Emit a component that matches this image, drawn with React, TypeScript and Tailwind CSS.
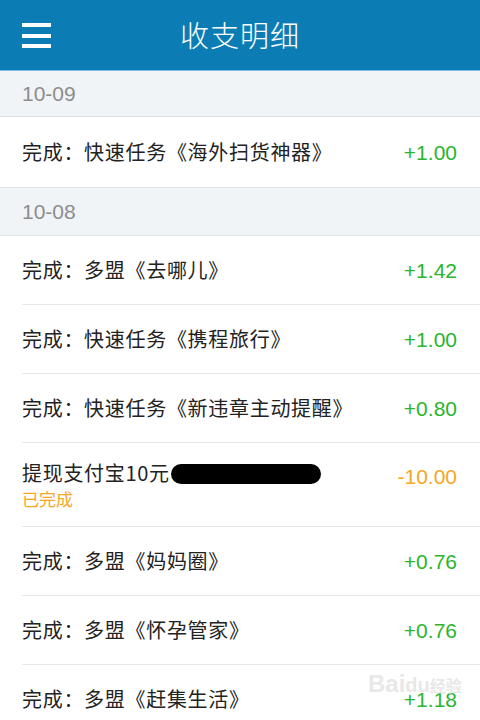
import React from "react";

const cjk = { fontFamily: '"Noto Sans CJK SC", "Noto Sans", sans-serif' };
const num = { fontFamily: '"Liberation Sans", Arial, sans-serif' };

type Row = { text: string; amount: string; kind: "plus" | "minus"; sub?: string; redact?: boolean };

const groups: { date: string; rows: Row[] }[] = [
  { date: "10-09", rows: [{ text: "完成：快速任务《海外扫货神器》", amount: "+1.00", kind: "plus" }] },
  {
    date: "10-08",
    rows: [
      { text: "完成：多盟《去哪儿》", amount: "+1.42", kind: "plus" },
      { text: "完成：快速任务《携程旅行》", amount: "+1.00", kind: "plus" },
      { text: "完成：快速任务《新违章主动提醒》", amount: "+0.80", kind: "plus" },
      { text: "提现支付宝10元", amount: "-10.00", kind: "minus", sub: "已完成", redact: true },
      { text: "完成：多盟《妈妈圈》", amount: "+0.76", kind: "plus" },
      { text: "完成：多盟《怀孕管家》", amount: "+0.76", kind: "plus" },
      { text: "完成：多盟《赶集生活》", amount: "+1.18", kind: "plus" },
    ],
  },
];

function RowItem({ r, last }: { r: Row; last: boolean }) {
  return (
    <div className="pl-[22px] bg-white">
      <div
        className={`flex items-center justify-between pr-[23px] ${r.sub ? "h-[84px]" : last ? "h-[70px]" : "h-[69px]"} ${
          last ? "" : "border-b border-[#e8e8e8]"
        }`}
      >
        <div className="flex flex-col">
          <div className="flex items-center text-[20px] text-[#222] leading-none tracking-[0.7px]" style={cjk}>
            <span>{r.text}</span>
            {r.redact && <span className="inline-block w-[150px] h-[20px] bg-black rounded-full ml-[1px] mt-[2px]" />}
          </div>
          {r.sub && (
            <div className="text-[17px] text-[#f5a623] leading-none mt-[6px]" style={cjk}>
              {r.sub}
            </div>
          )}
        </div>
        <div
          className={`text-[21px] leading-none ${r.kind === "plus" ? "text-[#2ab52a]" : "text-[#f5a623]"} ${
            r.sub ? "-mt-[16px]" : ""
          }`}
          style={num}
        >
          {r.amount}
        </div>
      </div>
    </div>
  );
}

export default function App() {
  return (
    <div className="w-[480px] h-[720px] overflow-hidden bg-white relative">
      <div className="h-[71px] bg-[#0c7db4] flex items-center relative border-b border-[#7cbde0]">
        <div className="absolute left-[22px] top-[23px] flex flex-col gap-[6.5px]">
          <div className="w-[29px] h-[4px] bg-white" />
          <div className="w-[29px] h-[4px] bg-white" />
          <div className="w-[29px] h-[4px] bg-white" />
        </div>
        <div className="flex-1 text-center text-white text-[29px] font-light tracking-[1px]" style={cjk}>
          收支明细
        </div>
      </div>
      {groups.map((g, gi) => (
        <div key={g.date}>
          <div
            className={`${gi === 0 ? "h-[46px]" : "h-[49px] border-t border-[#e3e6e9]"} bg-[#f0f4f7] flex items-center pl-[22px] text-[21px] text-[#8d8d8d] border-b border-[#dcdfe2]`}
            style={num}
          >
            {g.date}
          </div>
          {g.rows.map((r, i) => (
            <RowItem key={i} r={r} last={gi === 0 && i === g.rows.length - 1} />
          ))}
        </div>
      ))}
      <div className="absolute left-[368px] top-[672px] text-[#d9d9d9] opacity-60 text-[24px] font-bold leading-none" style={num}>
        Bai<span className="text-[20px]">du</span><span className="text-[16px]" style={cjk}>经验</span>
      </div>
    </div>
  );
}
